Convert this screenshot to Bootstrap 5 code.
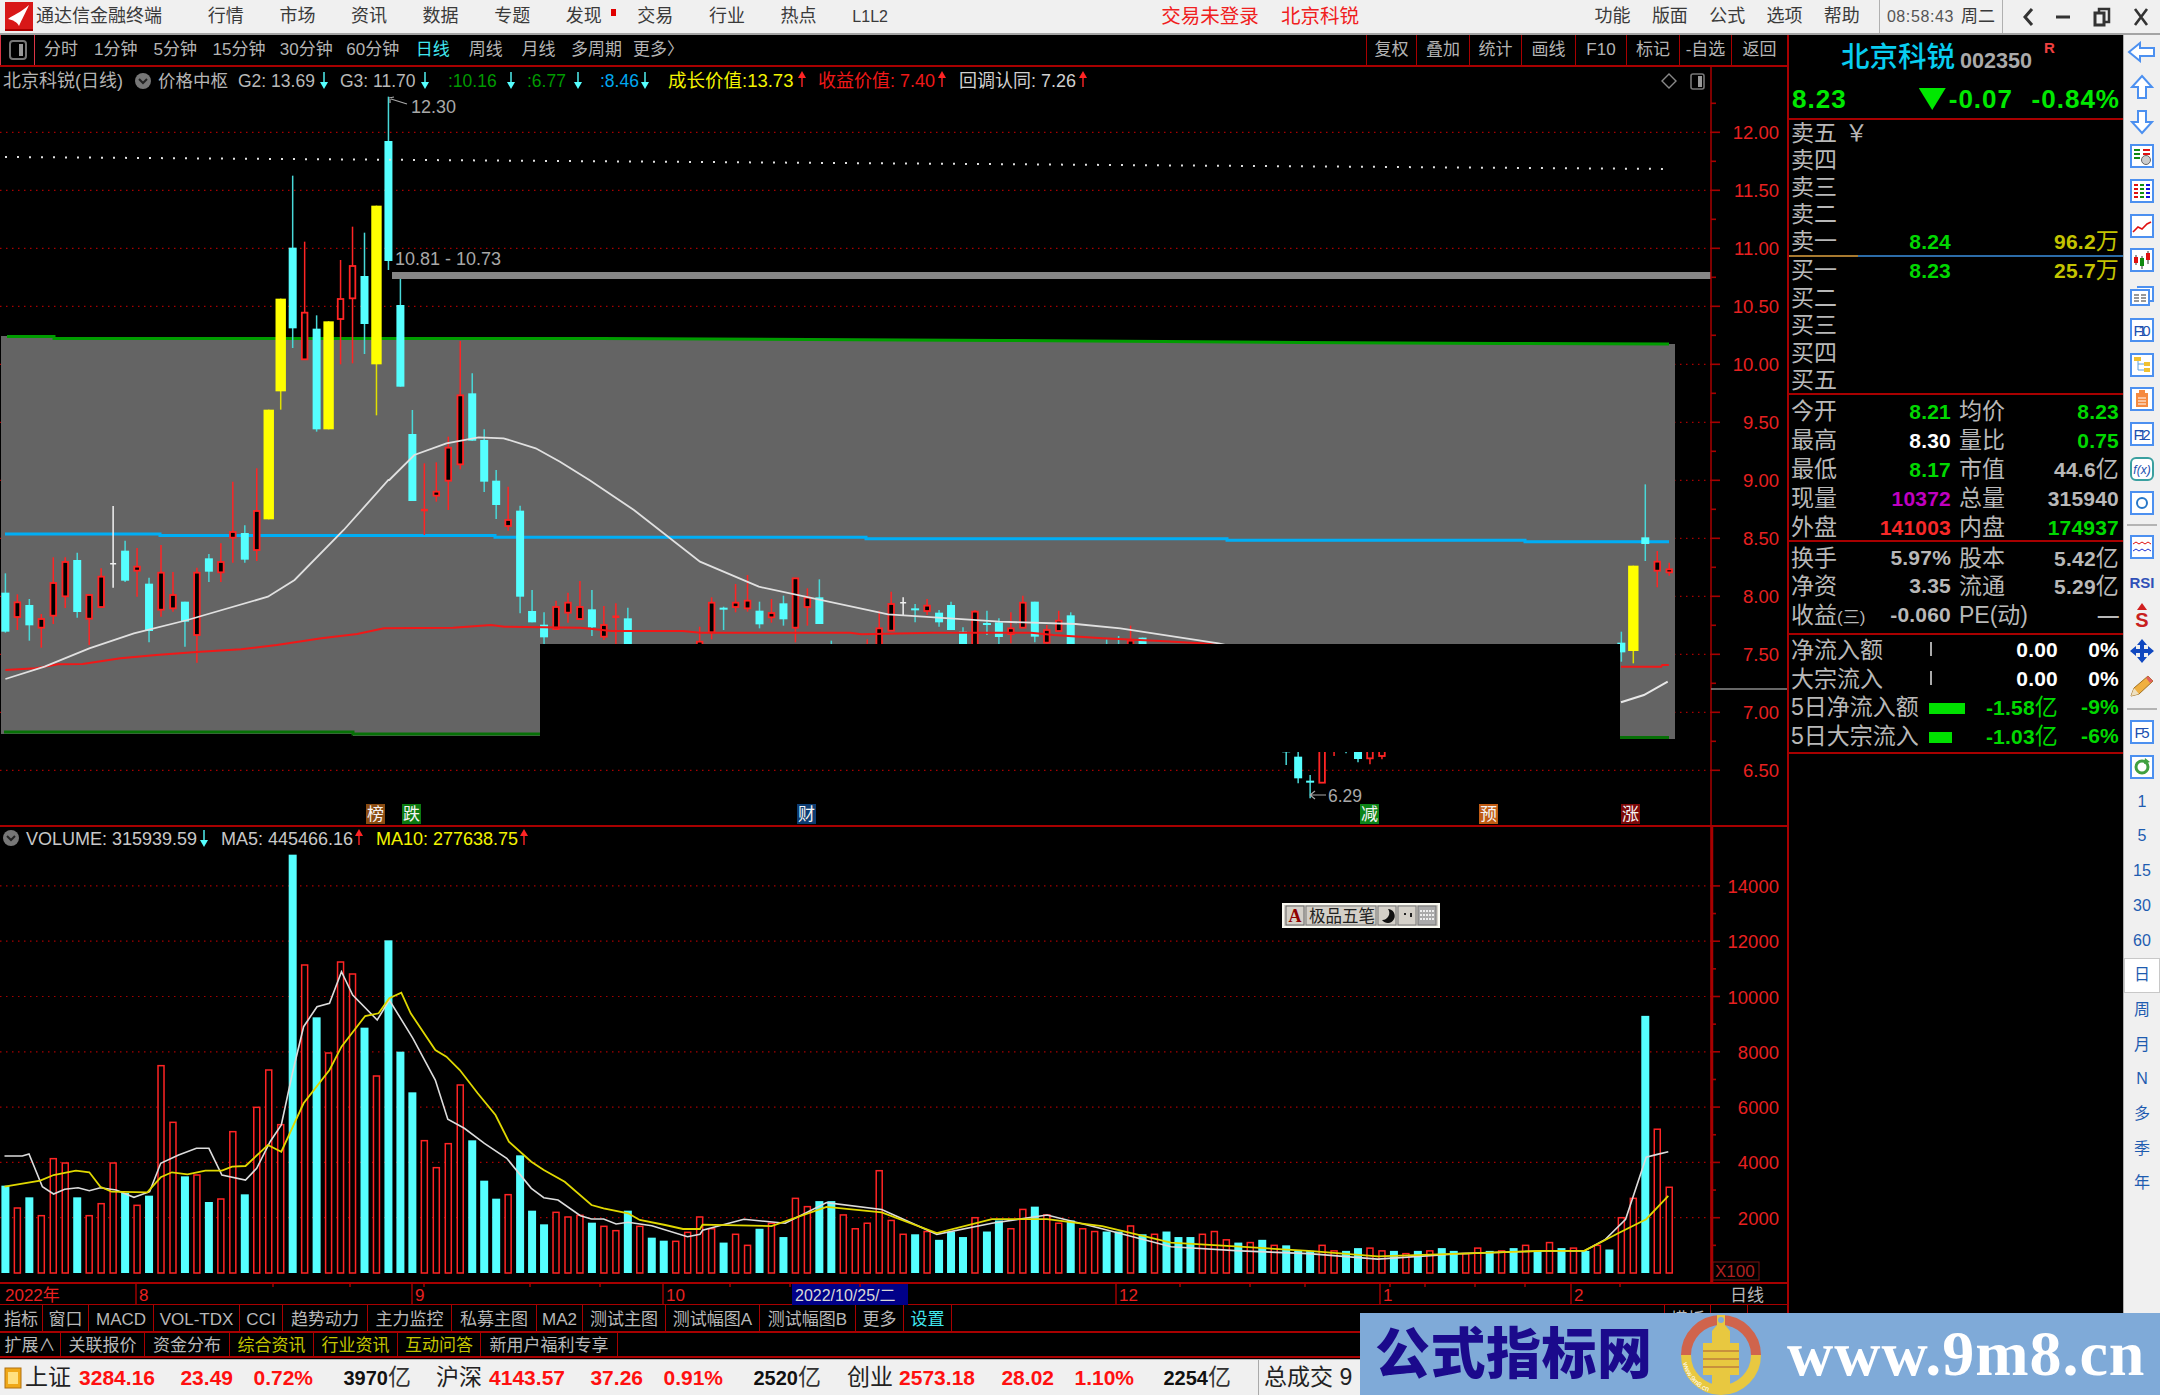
<!DOCTYPE html>
<html lang="zh-CN">
<head>
<meta charset="utf-8">
<title>通达信金融终端</title>
<link href="https://cdn.jsdelivr.net/npm/bootstrap@5.3.0/dist/css/bootstrap.min.css" rel="stylesheet">
<style>
html,body{margin:0;height:1395px;overflow:hidden;background:#000}
body,svg text{font-family:"Liberation Sans","Noto Sans CJK SC",sans-serif}
.tdx-app{width:2160px;height:1395px;position:relative;overflow:hidden;background:#000}
.tdx-title{height:35px;background:#f0f0f0;border-bottom:2px solid #a4a4a4;grid-template-columns:190px repeat(10,71.6px) 254px 100px 20px 80px 224px repeat(5,57.3px) 8.5px 124px 1fr;font-size:18px;color:#3a3a3a;line-height:33px;text-align:center}
.tdx-brand{display:flex;align-items:center;gap:3px;padding-left:5px;white-space:nowrap}
.tdx-red{color:#f02020;font-size:19.5px;white-space:nowrap}
.tdx-l12{font-size:16px}
.tdx-dot{position:relative}
.tdx-dot::after{content:"";position:absolute;width:5px;height:7px;background:#e00000;right:4px;top:9px}
.tdx-clock{border-left:1px solid #b0b0b0;border-right:1px solid #b0b0b0;height:33px;font-size:17px;display:flex;justify-content:center;gap:7px;white-space:nowrap}
.tdx-clock i{font-style:normal;color:#555;font-size:16px;letter-spacing:.6px}
.tdx-win{display:flex;justify-content:space-around;align-items:center;height:33px;padding:0 0 0 8px}
.tdx-body{height:1324px}
.tdx-left{width:1787px;flex:none}
.tdx-bar{height:32px;border-bottom:2px solid #a80000;color:#b4b4b4;font-size:17px;line-height:30px;text-align:center;grid-template-columns:35px 52px 57.5px 61.5px 66px 68.5px 64.5px 55.5px 50.5px 55px 61px 63px 1fr 50px 53px 52px 54px 51px 53px 52px 56px;white-space:nowrap}
.tdx-bar>.tdx-sep{border-left:1px solid #a80000}
.tdx-cyan{color:#40e8f0}
.tdx-chart{display:block;width:1787px;height:1238px}
.tdx-tabs{color:#b8b8b8;font-size:17px;text-align:center;white-space:nowrap;border-bottom:2px solid #a80000}
.tdx-tabs>span{border-right:1px solid #a80000;overflow:hidden}
.tdx-tabs-a{height:28px;line-height:29px;grid-template-columns:43px 46px 65px 86px 43px 85px 84px 85px 46px 83px 94px 96px 48px 48px 1fr 46px 37px 39px}
.tdx-tabs-b{height:25px;line-height:26px;grid-template-columns:61px 84px 85px 84px 84px 83px 137px 1fr}
.tdx-tabs>.tdx-none{border-right:0}
.tdx-olive{color:#c4c400}
.tdx-panel{width:336px;flex:none;background:#000;border-left:2px solid #a80000;color:#b8b8b8;font-size:23px;overflow:hidden}
.tdx-head{height:45px;padding-left:52px;gap:5px}
.tdx-head b{font-weight:500;font-size:28.5px;color:#08cdf0;line-height:45px}
.tdx-head span{font-size:21.6px;color:#aaa;padding-top:8px;font-weight:700}
.tdx-head sup{font-size:15px;color:#f04040;font-weight:700;top:-10px;position:relative;left:7px}
.tdx-price{height:40px;border-bottom:2px solid #a80000;color:#00e800;font-weight:700;font-size:26px;letter-spacing:1px;padding:0 3px 0 3px;line-height:38px;grid-template-columns:118px 103px 1fr}
.tdx-price>span:nth-child(n+2){text-align:right}
.tdx-tri{display:inline-block;width:27px;height:22px;background:#00e800;clip-path:polygon(0 0,100% 0,50% 100%);vertical-align:-2px;margin-right:3px}
.tdx-q{grid-template-columns:50px 110px 59px 109px;padding-left:2px;white-space:nowrap;font-size:23px}
.tdx-q b,.tdx-f b{text-align:right;font-size:21px;font-weight:700;letter-spacing:.2px}
.tdx-q em,.tdx-f em{font-style:normal;font-weight:400;font-size:23px}
.tdx-r27{height:27px;line-height:27px}
.tdx-r275{height:27.5px;line-height:27.5px}
.tdx-r29{height:29px;line-height:29px}
.tdx-r285{height:28.5px;line-height:28.5px}
.tdx-wide3{grid-template-columns:50px 110px 168px}
.tdx-mid{height:2px;background:linear-gradient(90deg,#a87a30 69px,#2c6ca8 69px)}
.tdx-sec{border-bottom:2px solid #a80000}
.tdx-pad6{padding-bottom:4px}
.tdx-pad3{padding-bottom:2px}
.tdx-top2{margin-top:2px}
.tdx-top1{margin-top:1px}
.tdx-paren{font-size:17px}
.tdx-f{grid-template-columns:138px 50px 79px 61px;padding-left:2px;white-space:nowrap;font-size:23px}
.tdx-g{color:#00d800}.tdx-w{color:#fff}.tdx-y{color:#c4c400}.tdx-m{color:#c000c0}.tdx-rr{color:#f82828}.tdx-s{color:#b8b8b8}
.tdx-meter{display:inline-block;height:11px;background:#00e000;vertical-align:1px}
.tdx-meter0{display:inline-block;width:2px;height:14px;background:#aaa;vertical-align:2px;margin-left:1px}
.tdx-side{flex:1;background:#f0f0f0;border-left:1px solid #b0b0b0;height:1360px;padding-top:0}
.tdx-it{height:34.7px;color:#1e5cb0;font-size:16px}
.tdx-gap9{height:9px}.tdx-gap12{height:12px}
.tdx-gap9 hr,.tdx-gap12 hr{margin:0 0;width:30px;border-top:2px solid #b4b4b4;opacity:1}
.tdx-sel{background:#fff;box-shadow:inset 0 0 0 1px #c8c8c8}
.tdx-foot{height:36px;background:#f0f0f0;border-top:1px solid #bbb;color:#222;font-size:23px;line-height:35px;white-space:nowrap;grid-template-columns:25px 54px 76px 78px 80px 98px 71px 83px 78px 80px 98px 72px 82px 79px 80px 97px 27px 1fr}
.tdx-foot b{font-size:21px;font-weight:700;color:#ff1010;text-align:right}
.tdx-foot u{text-decoration:none;font-size:20px;font-weight:700;color:#111;text-align:right}
.tdx-foot u em{font-style:normal;font-weight:400;font-size:23px;color:#333}
.tdx-foot .tdx-total{border-left:1px solid #aaa;padding-left:5px}
.tdx-mark{position:absolute;left:1360px;top:1313px;width:800px;height:82px;background:#7faad8;padding-left:15px}
.tdx-mark b{font-size:55px;color:#1b0a8c;font-weight:900;letter-spacing:.5px;line-height:82px;width:304px;flex:none}
.tdx-mark span{font-family:"Liberation Serif",serif;font-weight:700;font-size:64px;color:#fff;letter-spacing:1px;margin-left:24px;line-height:76px}
</style>
</head>
<body>
<div class="tdx-app d-flex flex-column">
  <div class="tdx-title d-grid">
    <div class="tdx-brand">
      <svg width="28" height="29" viewBox="0 0 28 29"><rect width="28" height="29" fill="#d81818"/><path d="M3 17C8 13 15 11 24 3C20 12 17 17 14 24C12 20 8 18 3 17Z" fill="#fff"/><path d="M0 27h28v2H0z" fill="#a00"/></svg>
      <span>通达信金融终端</span>
    </div>
    <span>行情</span><span>市场</span><span>资讯</span><span>数据</span><span>专题</span><span class="tdx-dot">发现</span><span>交易</span><span>行业</span><span>热点</span><span class="tdx-l12">L1L2</span>
    <span></span><span class="tdx-red">交易未登录</span><span></span><span class="tdx-red">北京科锐</span><span></span>
    <span>功能</span><span>版面</span><span>公式</span><span>选项</span><span>帮助</span><span></span>
    <div class="tdx-clock"><i>08:58:43</i><span>周二</span></div>
    <div class="tdx-win">
      <svg width="12" height="22" viewBox="0 0 12 22"><path d="M10 3L3 11L10 19" fill="none" stroke="#333" stroke-width="3"/></svg>
      <svg width="14" height="22" viewBox="0 0 14 22"><path d="M0 11h14" stroke="#333" stroke-width="3"/></svg>
      <svg width="18" height="22" viewBox="0 0 18 22"><path d="M6 6V3h10v13h-4" fill="none" stroke="#333" stroke-width="2.5"/><rect x="2" y="7" width="9" height="12" fill="none" stroke="#333" stroke-width="3"/></svg>
      <svg width="16" height="22" viewBox="0 0 16 22"><path d="M2 3L14 19M14 3L2 19" stroke="#333" stroke-width="2.6"/></svg>
    </div>
  </div>

  <div class="tdx-body d-flex">
    <div class="tdx-left d-flex flex-column">
      <div class="tdx-bar d-grid">
        <span class="d-flex align-items-center justify-content-center border-start border-end border-danger"><svg width="18" height="22" viewBox="0 0 18 22"><rect x="1" y="2" width="16" height="18" rx="3" fill="none" stroke="#777" stroke-width="2"/><rect x="10" y="5" width="4" height="12" fill="#999"/></svg></span>
        <span>分时</span><span>1分钟</span><span>5分钟</span><span>15分钟</span><span>30分钟</span><span>60分钟</span><span class="tdx-cyan">日线</span><span>周线</span><span>月线</span><span>多周期</span><span>更多〉</span><span></span>
        <span class="tdx-sep">复权</span><span class="tdx-sep">叠加</span><span class="tdx-sep">统计</span><span class="tdx-sep">画线</span><span class="tdx-sep">F10</span><span class="tdx-sep">标记</span><span class="tdx-sep">-自选</span><span class="tdx-sep">返回</span>
      </div>
      <svg id="tdxChart" class="tdx-chart" viewBox="0 67 1787 1238" xmlns="http://www.w3.org/2000/svg"></svg>
      <div class="tdx-tabs tdx-tabs-a d-grid">
        <span>指标</span><span>窗口</span><span>MACD</span><span>VOL-TDX</span><span>CCI</span><span>趋势动力</span><span>主力监控</span><span>私募主图</span><span>MA2</span><span>测试主图</span><span>测试幅图A</span><span>测试幅图B</span><span>更多</span><span class="tdx-cyan">设置</span><span></span><span>模板</span><span>+</span><span class="tdx-none"></span>
      </div>
      <div class="tdx-tabs tdx-tabs-b d-grid">
        <span>扩展∧</span><span>关联报价</span><span>资金分布</span><span class="tdx-olive">综合资讯</span><span class="tdx-olive">行业资讯</span><span class="tdx-olive">互动问答</span><span>新用户福利专享</span><span class="tdx-none"></span>
      </div>
    </div>

    <div class="tdx-panel">
      <div class="tdx-head d-flex align-items-center"><b>北京科锐</b><span>002350</span><sup>R</sup></div>
      <div class="tdx-price d-grid"><span>8.23</span><span><i class="tdx-tri"></i>-0.07</span><span>-0.84%</span></div>

      <div class="tdx-q tdx-wide3 tdx-r27 d-grid"><span>卖五</span><span class="tdx-s ps-1">￥</span><span></span></div>
      <div class="tdx-q tdx-wide3 tdx-r27 d-grid"><span>卖四</span><span></span><span></span></div>
      <div class="tdx-q tdx-wide3 tdx-r27 d-grid"><span>卖三</span><span></span><span></span></div>
      <div class="tdx-q tdx-wide3 tdx-r27 d-grid"><span>卖二</span><span></span><span></span></div>
      <div class="tdx-q tdx-wide3 tdx-r27 d-grid"><span>卖一</span><b class="tdx-g">8.24</b><b class="tdx-y">96.2<em>万</em></b></div>
      <div class="tdx-mid"></div>
      <div class="tdx-q tdx-wide3 tdx-r275 d-grid"><span>买一</span><b class="tdx-g">8.23</b><b class="tdx-y">25.7<em>万</em></b></div>
      <div class="tdx-q tdx-wide3 tdx-r275 d-grid"><span>买二</span><span></span><span></span></div>
      <div class="tdx-q tdx-wide3 tdx-r275 d-grid"><span>买三</span><span></span><span></span></div>
      <div class="tdx-q tdx-wide3 tdx-r275 d-grid"><span>买四</span><span></span><span></span></div>
      <div class="tdx-q tdx-wide3 tdx-r275 d-grid tdx-sec"><span>买五</span><span></span><span></span></div>

      <div class="tdx-q tdx-r29 tdx-top2 d-grid"><span>今开</span><b class="tdx-g">8.21</b><span class="ps-2">均价</span><b class="tdx-g">8.23</b></div>
      <div class="tdx-q tdx-r29 d-grid"><span>最高</span><b class="tdx-w">8.30</b><span class="ps-2">量比</span><b class="tdx-g">0.75</b></div>
      <div class="tdx-q tdx-r29 d-grid"><span>最低</span><b class="tdx-g">8.17</b><span class="ps-2">市值</span><b class="tdx-s">44.6<em>亿</em></b></div>
      <div class="tdx-q tdx-r29 d-grid"><span>现量</span><b class="tdx-m">10372</b><span class="ps-2">总量</span><b class="tdx-s">315940</b></div>
      <div class="tdx-q tdx-r29 d-grid tdx-sec"><span>外盘</span><b class="tdx-rr">141003</b><span class="ps-2">内盘</span><b class="tdx-g">174937</b></div>

      <div class="tdx-q tdx-r285 tdx-top2 d-grid"><span>换手</span><b class="tdx-s">5.97%</b><span class="ps-2">股本</span><b class="tdx-s">5.42<em>亿</em></b></div>
      <div class="tdx-q tdx-r285 d-grid"><span>净资</span><b class="tdx-s">3.35</b><span class="ps-2">流通</span><b class="tdx-s">5.29<em>亿</em></b></div>
      <div class="tdx-sec tdx-pad6"><div class="tdx-q tdx-r285 d-grid"><span>收益<span class="tdx-paren">(三)</span></span><b class="tdx-s">-0.060</b><span class="ps-2">PE(动)</span><b class="tdx-s">—</b></div></div>

      <div class="tdx-sec tdx-pad3 tdx-top1">
        <div class="tdx-f tdx-r285 d-grid"><span>净流入额</span><span><i class="tdx-meter0"></i></span><b class="tdx-w">0.00</b><b class="tdx-w">0%</b></div>
        <div class="tdx-f tdx-r285 d-grid"><span>大宗流入</span><span><i class="tdx-meter0"></i></span><b class="tdx-w">0.00</b><b class="tdx-w">0%</b></div>
        <div class="tdx-f tdx-r285 d-grid"><span>5日净流入额</span><span><i class="tdx-meter" style="width:36px"></i></span><b class="tdx-g">-1.58<em>亿</em></b><b class="tdx-g">-9%</b></div>
        <div class="tdx-f tdx-r285 d-grid"><span>5日大宗流入</span><span><i class="tdx-meter" style="width:23px"></i></span><b class="tdx-g">-1.03<em>亿</em></b><b class="tdx-g">-6%</b></div>
      </div>
    </div>

    <div class="tdx-side d-flex flex-column align-items-center">
      <div class="tdx-it d-flex align-items-center"><svg width="30" height="22" viewBox="0 0 30 22"><path d="M2 11L13 2V7H27V15H13V20Z" fill="#fff" stroke="#4c90f0" stroke-width="2"/></svg></div>
      <div class="tdx-it d-flex align-items-center"><svg width="24" height="26" viewBox="0 0 24 26"><path d="M12 2L22 13H16V24H8V13H2Z" fill="#fff" stroke="#4c90f0" stroke-width="2"/></svg></div>
      <div class="tdx-it d-flex align-items-center"><svg width="24" height="26" viewBox="0 0 24 26"><path d="M12 24L22 13H16V2H8V13H2Z" fill="#fff" stroke="#4c90f0" stroke-width="2"/></svg></div>
      <div class="tdx-it d-flex align-items-center"><svg width="24" height="24" viewBox="0 0 24 24"><rect x="1" y="1" width="22" height="22" fill="#fff" stroke="#4c90f0" stroke-width="2"/><path d="M4 6h6M4 10h6M4 14h6" stroke="#108a10" stroke-width="2"/><path d="M13 6h7M13 10h7" stroke="#e01010" stroke-width="2"/><circle cx="16" cy="16" r="4.5" fill="#ccc" stroke="#666"/></svg></div>
      <div class="tdx-it d-flex align-items-center"><svg width="24" height="24" viewBox="0 0 24 24"><rect x="1" y="1" width="22" height="22" fill="#fff" stroke="#4c90f0" stroke-width="2"/><path d="M4 6h4M4 10h4M4 14h4M4 18h4" stroke="#e01010" stroke-width="2"/><path d="M10 6h4M10 10h4M10 14h4M10 18h4" stroke="#109010" stroke-width="2"/><path d="M16 6h4M16 10h4M16 14h4M16 18h4" stroke="#1010e0" stroke-width="2"/></svg></div>
      <div class="tdx-it d-flex align-items-center"><svg width="24" height="24" viewBox="0 0 24 24"><rect x="1" y="1" width="22" height="22" fill="#fff" stroke="#4c90f0" stroke-width="2"/><path d="M3 18L8 13L12 15L17 10L21 8" fill="none" stroke="#e01010" stroke-width="1.6"/></svg></div>
      <div class="tdx-it d-flex align-items-center"><svg width="24" height="24" viewBox="0 0 24 24"><rect x="1" y="1" width="22" height="22" fill="#fff" stroke="#4c90f0" stroke-width="2"/><path d="M6 7V17M12 8V21M18 3V16" stroke="#333"/><rect x="4" y="9" width="4" height="6" fill="#e01010"/><rect x="10" y="10" width="4" height="8" fill="#108a10"/><rect x="16" y="5" width="4" height="7" fill="#e01010"/></svg></div>
      <div class="tdx-it d-flex align-items-center"><svg width="26" height="24" viewBox="0 0 26 24"><path d="M8 4H24V18H19" fill="#fff" stroke="#4c90f0" stroke-width="2"/><rect x="2" y="7" width="18" height="15" fill="#fff" stroke="#4c90f0" stroke-width="2"/><path d="M5 12h5M12 12h5M5 15h5M12 15h5M5 18h5M12 18h5" stroke="#777" stroke-width="1.5"/></svg></div>
      <div class="tdx-it d-flex align-items-center"><svg width="24" height="24" viewBox="0 0 24 24"><rect x="1" y="1" width="22" height="22" fill="#fff" stroke="#4c90f0" stroke-width="2"/><text x="12" y="18" text-anchor="middle" font-size="15" fill="#2050b0" textLength="17">F10</text></svg></div>
      <div class="tdx-it d-flex align-items-center"><svg width="24" height="24" viewBox="0 0 24 24"><rect x="1" y="1" width="22" height="22" fill="#fff" stroke="#4c90f0" stroke-width="2"/><path d="M8 7V17H14M8 11H14" fill="none" stroke="#5aa0e0"/><rect x="4" y="4" width="7" height="4" fill="#f0c030"/><rect x="14" y="9" width="6" height="4" fill="#f0c030"/><rect x="14" y="15" width="6" height="4" fill="#f0c030"/></svg></div>
      <div class="tdx-it d-flex align-items-center"><svg width="24" height="24" viewBox="0 0 24 24"><rect x="1" y="1" width="22" height="22" fill="#fff" stroke="#4c90f0" stroke-width="2"/><rect x="6" y="6" width="12" height="14" fill="#f58a40"/><rect x="9" y="3" width="6" height="4" fill="#f58a40"/><path d="M8 11h8M8 14h8M8 17h8" stroke="#fff"/></svg></div>
      <div class="tdx-it d-flex align-items-center"><svg width="24" height="24" viewBox="0 0 24 24"><rect x="1" y="1" width="22" height="22" fill="#fff" stroke="#4c90f0" stroke-width="2"/><text x="12" y="18" text-anchor="middle" font-size="15" fill="#2050b0" textLength="17">F12</text></svg></div>
      <div class="tdx-it d-flex align-items-center"><svg width="24" height="24" viewBox="0 0 24 24"><rect x="1" y="1" width="22" height="22" rx="5" fill="#fff" stroke="#3aa0a0" stroke-width="2"/><text x="12" y="17" text-anchor="middle" font-size="12" font-style="italic" fill="#2050b0">f(x)</text></svg></div>
      <div class="tdx-it d-flex align-items-center"><svg width="24" height="24" viewBox="0 0 24 24"><rect x="1" y="1" width="22" height="22" fill="#fff" stroke="#4c90f0" stroke-width="2"/><circle cx="12" cy="12" r="5" fill="none" stroke="#2878c8" stroke-width="2"/></svg></div>
      <div class="tdx-gap9 d-flex align-items-center"><hr></div>
      <div class="tdx-it d-flex align-items-center"><svg width="24" height="24" viewBox="0 0 24 24"><rect x="1" y="1" width="22" height="22" fill="#fff" stroke="#4c90f0" stroke-width="2"/><path d="M3 9l3-2 3 2 3-2 3 2 3-2 3 2" fill="none" stroke="#e01010"/><path d="M3 16l3-2 3 2 3-2 3 2 3-2 3 2" fill="none" stroke="#2030d0"/></svg></div>
      <div class="tdx-it d-flex align-items-center"><svg width="28" height="22" viewBox="0 0 28 22"><text x="14" y="17" text-anchor="middle" font-size="15" font-weight="700" fill="#3050b8">RSI</text></svg></div>
      <div class="tdx-it d-flex align-items-center"><svg width="24" height="28" viewBox="0 0 24 28"><path d="M12 1L17 8H7Z" fill="#d02020"/><text x="12" y="25" text-anchor="middle" font-size="20" font-weight="700" fill="#c82020">S</text></svg></div>
      <div class="tdx-it d-flex align-items-center"><svg width="26" height="26" viewBox="0 0 26 26"><path d="M13 1L18 7H15V11H19V8L25 13L19 18V15H15V19H18L13 25L8 19H11V15H7V18L1 13L7 8V11H11V7H8Z" fill="#1048c0"/></svg></div>
      <div class="tdx-it d-flex align-items-center"><svg width="26" height="24" viewBox="0 0 26 24"><path d="M2 22L5 14L19 2L24 7L10 20Z" fill="#f0b040" stroke="#a07020"/><path d="M2 22L5 14L10 20Z" fill="#eee0c0"/><path d="M19 2L24 7L21 9L17 4Z" fill="#e06060"/></svg></div>
      <div class="tdx-gap12 d-flex align-items-center"><hr></div>
      <div class="tdx-it d-flex align-items-center"><svg width="24" height="24" viewBox="0 0 24 24"><rect x="1" y="1" width="22" height="22" fill="#fff" stroke="#4c90f0" stroke-width="2"/><text x="12" y="18" text-anchor="middle" font-size="15" fill="#2050b0" textLength="15">F5</text></svg></div>
      <div class="tdx-it d-flex align-items-center"><svg width="24" height="24" viewBox="0 0 24 24"><rect x="1" y="1" width="22" height="22" fill="#fff" stroke="#4c90f0" stroke-width="2"/><circle cx="12" cy="12" r="6" fill="none" stroke="#40a040" stroke-width="3"/><path d="M15 3l5 4-6 2Z" fill="#40a040"/></svg></div>
      <div class="tdx-it d-flex align-items-center">1</div>
      <div class="tdx-it d-flex align-items-center">5</div>
      <div class="tdx-it d-flex align-items-center">15</div>
      <div class="tdx-it d-flex align-items-center">30</div>
      <div class="tdx-it d-flex align-items-center">60</div>
      <div class="tdx-it tdx-sel d-flex align-items-center justify-content-center w-100">日</div>
      <div class="tdx-it d-flex align-items-center">周</div>
      <div class="tdx-it d-flex align-items-center">月</div>
      <div class="tdx-it d-flex align-items-center">N</div>
      <div class="tdx-it d-flex align-items-center">多</div>
      <div class="tdx-it d-flex align-items-center">季</div>
      <div class="tdx-it d-flex align-items-center">年</div>
    </div>
  </div>

  <div class="tdx-foot d-grid">
    <span class="d-flex align-items-center ps-1"><svg width="18" height="24" viewBox="0 0 18 24"><rect x="1" y="2" width="16" height="20" fill="#f0a818" stroke="#b07010"/><rect x="4" y="6" width="10" height="12" fill="#ffe080"/></svg></span>
    <span>上证</span><b>3284.16</b><b>23.49</b><b>0.72%</b><u>3970<em>亿</em></u><span class="text-end">沪深</span><b>4143.57</b><b>37.26</b><b>0.91%</b><u>2520<em>亿</em></u><span class="text-end">创业</span><b>2573.18</b><b>28.02</b><b>1.10%</b><u>2254<em>亿</em></u><span></span><span class="tdx-total">总成交 9</span>
  </div>

  <div class="tdx-mark d-flex align-items-center">
    <b>公式指标网</b>
    <svg width="84" height="82" viewBox="0 0 84 82" class="flex-none">
      <path d="M7 42A35 35 0 0 1 77 42" fill="none" stroke="#d0644c" stroke-width="10"/>
      <path d="M7 42A35 35 0 0 0 77 42" fill="none" stroke="#e8c840" stroke-width="10"/>
      <path d="M38 2h8v10l5 6v12h9v32h-9v14H33V62h-9V30h9V18l5-6Z" fill="#e8c840"/>
      <circle cx="42" cy="7" r="3" fill="#7faad8"/>
      <path d="M24 38h36M24 46h36M24 54h36" stroke="#c8903c" stroke-width="2"/>
      <path id="tdxArc" d="M4 50A38 38 0 0 0 34 80" fill="none"/>
      <text font-size="7" fill="#fff"><textPath href="#tdxArc">www.9m8.cn</textPath></text>
    </svg>
    <span>www.9m8.cn</span>
  </div>
</div>

<script src="https://cdn.jsdelivr.net/npm/bootstrap@5.3.0/dist/js/bootstrap.bundle.min.js"></script>
<script>
(function(){
var S=[];var RED='#a80000',TXT='#e82020',CY='#55ffff',RD='#ff2424',YL='#ffff00';
function bx(i){return 5.4+11.97*i}
function Y(z){return 480+z/3}
function line(x1,y1,x2,y2,c,w,extra){S.push('<line x1="'+x1+'" y1="'+y1+'" x2="'+x2+'" y2="'+y2+'" stroke="'+c+'" stroke-width="'+(w||1)+'" '+(extra||'')+'/>')}
function rect(x,y,w,h,f,extra){S.push('<rect x="'+x+'" y="'+y+'" width="'+w+'" height="'+h+'" fill="'+f+'" '+(extra||'')+'/>')}
function poly(p,c,w,extra){S.push('<polyline fill="none" points="'+p.map(function(a){return a[0].toFixed(1)+','+a[1].toFixed(1)}).join(' ')+'" stroke="'+c+'" stroke-width="'+w+'" '+(extra||'')+'/>')}
function txt(x,y,s,c,fs,extra){S.push('<text x="'+x+'" y="'+y+'" fill="'+c+'" font-size="'+fs+'" '+(extra||'')+'>'+s+'</text>')}
function arrow(x,y,c,up){
  if(up){line(x,y-7,x,y+7,c,1.4);S.push('<path d="M'+(x-4)+' '+(y-2)+'L'+x+' '+(y-9)+'L'+(x+4)+' '+(y-2)+'Z" fill="'+c+'"/>')}
  else{line(x,y-8,x,y+6,c,1.4);S.push('<path d="M'+(x-4)+' '+(y+2)+'L'+x+' '+(y+9)+'L'+(x+4)+' '+(y+2)+'Z" fill="'+c+'"/>')}
}
var z6=function(a){return a.map(function(p){return [p[0]/2.24,480+p[1]/3]})};
var z12=function(a){return a.map(function(p){return [540+p[0]/2.24,480+p[1]/3]})};
var z5=function(a){return a.map(function(p){return [p[0]/2.8,80+p[1]/3]})};
var z10=function(a){return a.map(function(p){return [1200+p[0]/2.613,480+p[1]/3]})};
var z9=function(a){return a.map(function(p){return [p[0]/2.24,840+p[1]/3]})};
var sh=function(a){return a.map(function(p){return [p[0]*1.3776,p[1]*1.3776]})};

/* price grid */
function py(p){return 132.3+(12-p)*116}
for(var p=12;p>=6.5;p-=.5){line(0,py(p),1711,py(p),RED,1.2,'stroke-dasharray="1.5 4.5"')}
function vy(v){return 1273-v*0.02765}
for(var v=2000;v<=14000;v+=2000){line(0,vy(v),1711,vy(v),RED,1.2,'stroke-dasharray="1.5 4.5"')}

/* band */
S.push('<polygon fill="#646464" points="1,336 54,336 54,338 600,338 1000,340 1300,342 1675,344 1675,739 1620,739 540,736 353,736 353,734 1,734"/>');
poly([[7,336.5],[54,336.5],[54,338.5],[600,338.5],[1000,340.5],[1300,342.5],[1500,343.5],[1669,344]],'#009c00',3);
poly([[4,732],[353,732],[353,734],[540,734]],'#067006',3);
poly([[1620,737.5],[1669,737.5]],'#067006',3);
poly([[5,534],[160,534],[160,535.5],[495,535.5],[495,537.3],[866,537.3],[866,538.7],[1227,538.7],[1227,540.3],[1525,540.3],[1525,541.7],[1669,541.7]],'#00aef5',3);

/* candles: [index,type,high,bodyTop,bodyBottom,low] */
var C=[[0,'c',280,338,455,458],[1,'r',343,367,411,450],[2,'c',357,375,436,482],[3,'r',402,417,443,503],[4,'r',232,309,407,432],[5,'r',232,246,349,384],[6,'c',218,240,396,413],[7,'r',345,345,416,495],[8,'r',265,290,381,381],[9,'w',78,249,251,323],[10,'c',182,212,302,306],[11,'r',204,260,272,350],[12,'c',293,311,453,487],[13,'r',195,278,389,410],[14,'r',276,345,385,395],[15,'c',365,365,425,500],[16,'r',263,278,465,548],[17,'c',222,235,275,306],[18,'r',190,246,277,306],[19,'r',5,156,173,248],[20,'c',136,159,239,248],[21,'r',-35,93,210,243],
[22,'y',-211,-211,118,118],[23,'y',-544,-544,-266,-211],[24,'c',-913,-697,-455,-396],[25,'r',-715,-502,-362,-362],[26,'c',-494,-454,-152,-145],[27,'y',-476,-476,-152,-152],[28,'r',-660,-543,-483,-347],[29,'r',-760,-642,-545,-350],[30,'c',-742,-612,-468,-378],[31,'y',-823,-823,-347,-194],[32,'c',-1150,-1017,-657,-630],[33,'c',-603,-525,-280,-280],[34,'c',-210,-138,63,63],[35,'r',-50,88,93,165],[36,'r',-53,35,47,65],[37,'r',-130,-97,2,90],[38,'r',-417,-254,-47,-32],[39,'c',-320,-260,-118,-118],[40,'c',-152,-120,5,36],[41,'c',-30,2,75,117],[42,'r',20,120,138,152],[43,'c',77,92,350,400],[44,'c',330,393,427,427],[45,'c',397,434,472,520],[46,'r',362,381,447,447],[47,'r',338,368,398,428],[48,'r',303,381,417,420],[49,'c',330,388,442,468],[50,'r',378,435,470,480],[51,'r',370,408,412,495],[52,'c',383,415,560,600],
[58,'r',440,485,560,600],[59,'r',352,368,457,478],[60,'c',380,383,386,450],[61,'r',312,368,381,397],[62,'r',285,362,385,395],[63,'c',365,392,433,445],[64,'r',357,399,412,428],[65,'c',347,370,418,437],[66,'r',295,295,443,487],[67,'r',325,353,381,437],[68,'c',298,352,432,432],[69,'c',482,500,560,600],[72,'r',478,500,560,600],[73,'r',392,445,560,600],[74,'r',335,372,452,452],[75,'w',352,366,368,405],[76,'c',372,385,390,427],[77,'r',357,377,393,405],[78,'c',390,398,427,440],[79,'c',365,375,450,450],[80,'c',442,455,560,600],[81,'r',390,395,560,600],[82,'c',392,429,431,465],[83,'c',415,427,471,560],[84,'r',397,445,462,490],[85,'r',347,368,443,443],[86,'c',365,365,470,487],[87,'r',435,450,488,560],[88,'r',392,422,453,453],[89,'c',397,406,560,600],[92,'c',478,500,560,600],[93,'c',468,500,560,600],[94,'r',437,482,560,600],[95,'c',473,473,560,600],
[107,'c',700,700,817,855],[108,'c',700,830,895,910],[109,'c',885,902,904,955],[110,'r',700,700,908,908],[111,'r',700,700,720,828],[112,'c',700,700,720,820],[113,'c',700,700,837,847],[114,'r',700,700,835,853],[115,'r',700,700,828,838],
[135,'c',455,488,517,545],[136,'y',257,257,513,550],[137,'c',13,172,192,243],[138,'r',213,245,272,322],[139,'r',248,268,277,287]];
C.forEach(function(d){
  var x=bx(d[0]),t=d[1],col=t=='c'?CY:t=='r'?RD:t=='y'?YL:'#f0f0f0';
  line(x,Y(d[2]),x,Y(d[5]),t=='c'?'#48d8d8':t=='y'?'#e0e000':col,1.5);
  var tp=Y(d[3]),bt=Y(d[4]);
  if(t=='c')rect(x-4,tp,8,Math.max(bt-tp,2),CY);
  if(t=='y')rect(x-5.2,tp,10.4,bt-tp,YL);
  if(t=='w')rect(x-3,tp,6,Math.max(bt-tp,1.5),col);
  if(t=='r'){ if(bt-tp<3) rect(x-3.5,tp-.5,7,2.5,RD); else rect(x-2.8,tp,5.6,bt-tp,'#000','stroke="'+RD+'" stroke-width="1.8"');}
});

/* averages */
poly(z6([[12,570],[80,565],[130,553],[185,552],[270,535],[350,525],[440,516],[540,508],[620,495],[720,475],[800,462],[860,445],[1015,443],[1100,435],[1130,440],[1300,443],[1370,453],[1530,453],[1568,458]]).concat(z12([[695,458],[720,463],[880,458],[1100,458],[1150,465],[1260,475],[1390,483],[1480,490],[1568,500]])),'#f01818',2);
poly(z10([[1100,560],[1205,560],[1208,555],[1225,555]]),'#f01818',2);
poly(z6([[12,597],[100,560],[200,505],[300,460],[420,420],[600,350],[660,300],[770,150],[870,0]]).concat(z5([[1090,1200],[1160,1125],[1250,1090],[1340,1072],[1410,1075],[1500,1105],[1568,1145]])).concat(z6([[1320,0],[1420,90],[1568,245]])).concat(z12([[490,320],[780,403],[1030,425],[1200,432],[1300,445],[1520,490],[1568,505]])),'#e0e0e0',1.8);
poly(z10([[1100,667],[1160,645],[1222,605]]),'#e8e8e8',2);

/* covered area of the chart */
rect(540,644,1080,108,'#000');

/* overlays */
line(5,157,1670,169,'#e0e0e0',2,'stroke-dasharray="2 10"');
rect(392,272,1319,7,'#868686');
txt(395,265,'10.81 - 10.73','#a8a8a8',18);
txt(411,113,'12.30','#a8a8a8',18);
S.push('<path d="M389 98L394 97M391 99L407 104M390 99V103" stroke="#aaa" stroke-width="1.2" fill="none"/>');
txt(1328,802,'6.29','#a8a8a8',17.5);
S.push('<path d="M1310 795H1326M1310 795L1315 791M1310 795L1315 799" stroke="#aaa" stroke-width="1.2" fill="none"/>');

/* signal badges */
[[366,'榜','#8a4c12'],[402,'跌','#0c7a10'],[797,'财','#0c3c72'],[1360,'减','#0c8418'],[1479,'预','#c05c14'],[1621,'涨','#7c0808']].forEach(function(b){
  rect(b[0],804,19,20,b[2]);
  txt(b[0]+9.5,820,b[1],'#f4f4f4',17,'text-anchor="middle"');
});

/* axis */
line(1711,67,1711,1283,RED,1.5);
line(0,826,1787,826,RED,2);
line(1712,826,1712,1283,RED,2.5);
for(var q=12.25;q>=6.5;q-=.25){var yy=py(q),maj=Math.abs(q*2-Math.round(q*2))<.01;line(1711,yy,maj?1720:1716,yy,RED,1.6);if(maj&&q<=12)txt(1779,yy+7,q.toFixed(2),TXT,18.5,'text-anchor="end"');}
for(var w=1000;w<=14000;w+=1000){var vv=vy(w),mj=w%2000==0;line(1711,vv,mj?1720:1716,vv,RED,1.6);if(mj)txt(1779,vv+7,w,TXT,18.5,'text-anchor="end"');}
line(1711,689,1787,689,'#8a8a8a',1.6);

/* volumes */
var V=[['c',1038],['r',1105],['c',1073],['r',1128],['r',957],['r',970],['c',1073],['r',1128],['r',1092],['r',970],['c',1060],['r',1097],['c',1068],['r',678],['r',848],['c',1010],['r',1006],['c',1087],['r',1078],['r',876],['c',1064],['r',803],['r',691],['r',855],['c',45],['r',376],['c',533],['r',640],['r',367],['r',403],['c',564],['r',709],['c',302],['c',636],['c',758],['r',903],['r',984],['r',912],['r',736],['c',902],['c',1023],['c',1077],['r',1065],['c',947],['c',1113],['c',1154],['r',1118],['r',1132],['r',1127],['c',1149],['r',1160],['r',1173],['c',1113],['r',1160],['c',1194],['c',1203],['r',1205],['r',1178],['r',1132]];
V.forEach(function(d,i){
  var h=(1300-d[1])/3,x=bx(i);
  if(d[0]=='c')rect(x-4,1273-h,8,h,CY);else rect(x-3,1273-h,6,h,'#000','stroke="'+RD+'" stroke-width="1.5"');
});
var M=[[59,'r',1600],[60,'c',1100],[61,'r',1400],[62,'r',1000],[63,'c',1600],[64,'r',1800],[65,'c',1300],[66,'r',2700],[67,'r',2400],[68,'c',2600],[69,'c',2600],[70,'r',2100],[71,'r',1600],[72,'r',1800],[73,'r',3700],[74,'r',1900],[75,'r',1400],[76,'c',1400],[77,'r',1500],[78,'c',1200],[79,'c',1500],[80,'c',1300],[81,'r',2000],[82,'c',1500],[83,'c',1900],[84,'r',1600],[85,'r',2300],[86,'c',2400],[87,'r',2100],[88,'r',1800],[89,'c',1900],[90,'r',1600],[91,'r',1500],[92,'c',1500],[93,'c',1500],[94,'r',1700],[95,'c',1400],[96,'r',1400],[97,'c',1500],[98,'c',1300],[99,'c',1300],[100,'r',1400],[101,'r',1500],[102,'r',1200],[103,'c',1100],[104,'r',1100],[105,'c',1200],[106,'r',1000],[107,'c',1000],[108,'c',800],[109,'c',800],[110,'r',1000],[111,'r',800],[112,'c',800],[113,'c',900],[114,'r',900],[115,'r',800],[116,'c',800],[117,'r',700],[118,'c',800],[119,'r',800],[120,'c',900],[121,'c',800],[122,'r',700],[123,'r',900],[124,'c',800],[125,'r',800],[126,'c',900],[127,'r',1000],[128,'c',800],[129,'r',1100],[130,'c',900],[131,'r',900],[132,'c',800],[133,'r',1000],[134,'c',850],[135,'r',2000],[136,'r',2700],[137,'c',9300],[138,'r',5200],[139,'r',3100]];
M.forEach(function(d){
  var h=d[2]*0.02765,x=bx(d[0]);
  if(d[1]=='c')rect(x-4,1273-h,8,h,CY);else rect(x-3,1273-h,6,h,'#000','stroke="'+RD+'" stroke-width="1.5"');
});
poly(z9([[10,948],[50,948],[65,942],[95,1040],[120,1062],[145,1048],[175,1043],[200,1052],[225,1043],[260,1050],[300,1072],[335,1055],[360,970],[400,945],[440,925],[468,925],[497,1005],[550,1020],[575,985],[605,905],[630,855],[655,700],[680,560],[710,500],[738,490],[765,395],[790,465],[845,540],[872,480],[925,595],[975,720],[1003,838],[1040,865],[1085,910],[1135,955],[1190,1045],[1218,1073],[1250,1080],[1300,1127],[1325,1137],[1352,1137],[1380,1152],[1407,1147],[1460,1157],[1540,1190],[1568,1183]]).concat(sh([[510,893],[540,885],[570,888],[600,873],[640,878],[680,896],[720,888],[760,882],[800,892],[850,905],[900,908],[950,910],[1000,914],[1060,910],[1120,908],[1150,908],[1165,900],[1180,885],[1195,840],[1203,838],[1211,836]])),'#dcdcdc',1.6);
poly(z9([[10,1040],[90,1022],[120,1005],[170,992],[200,997],[225,1040],[250,1055],[330,1057],[360,1012],[385,997],[420,1003],[460,992],[497,992],[520,980],[550,978],[600,915],[630,935],[680,790],[738,690],[765,620],[818,528],[848,520],[872,475],[899,458],[920,520],[975,630],[1000,650],[1030,690],[1070,760],[1110,825],[1140,905],[1190,965],[1218,990],[1265,1025],[1325,1095],[1352,1105],[1407,1120],[1433,1140],[1490,1155],[1530,1167],[1568,1167]]).concat(sh([[510,889],[560,890],[600,876],[640,880],[680,895],[720,885],[760,885],[800,890],[850,902],[900,905],[950,908],[1000,912],[1060,910],[1120,908],[1150,908],[1175,895],[1195,885],[1211,868]])),'#e0d800',1.8);

rect(1713,1262,46,18,'#000','stroke="#7a1010" stroke-width="1"');
txt(1715,1277,'X100','#b02020',17);

/* time axis */
line(0,1283,1787,1283,RED,2);
line(0,1305,1787,1305,RED,2);
rect(792,1284,116,21,'#000088');
txt(795,1301,'2022/10/25/二','#d8d8d8',16);
txt(5,1301,'2022年',TXT,17);
[[136,'8'],[412,'9'],[663,'10'],[1116,'12'],[1380,'1'],[1571,'2']].forEach(function(t){line(t[0],1283,t[0],1305,RED,1.4);txt(t[0]+3,1301,t[1],TXT,17)});
[273,350,424,530,600,730,790,860,1180,1250,1305,1390,1425,1475,1525,1620].forEach(function(x){line(x,1283,x,1287,RED,1.4)});
txt(1730,1301,'日线','#b8b8b8',17);

/* legends */
S.push('<circle cx="143" cy="81" r="8" fill="#777"/><path d="M139 79l4 4 4-4" stroke="#222" stroke-width="2" fill="none"/>');
txt(3,87,'北京科锐(日线)','#b4b4b4',18);
txt(158,87,'价格中枢','#b4b4b4',17.5);
txt(238,87,'G2: 13.69','#b8b8b8',17.5);arrow(324,80,CY);
txt(340,87,'G3: 11.70','#b8b8b8',17.5);arrow(425,80,CY);
txt(448,87,':10.16','#009a00',17.5);arrow(511,80,CY);
txt(527,87,':6.77','#009a00',17.5);arrow(578,80,CY);
txt(600,87,':8.46','#00a8f0',17.5);arrow(645,80,CY);
txt(668,87,'成长价值:13.73','#f4f400',18.5);arrow(802,80,RD,1);
txt(818,87,'收益价值: 7.40','#f01818',18);arrow(942,80,RD,1);
txt(959,87,'回调认同: 7.26','#d0d0d0',18);arrow(1083,80,RD,1);
S.push('<path d="M1669 74l7 7-7 7-7-7Z" fill="none" stroke="#888" stroke-width="1.4"/><rect x="1691" y="74" width="13" height="15" rx="2" fill="none" stroke="#777" stroke-width="1.6"/><rect x="1698" y="76" width="4" height="11" fill="#999"/>');
S.push('<circle cx="11" cy="838" r="8" fill="#777"/><path d="M7 836l4 4 4-4" stroke="#222" stroke-width="2" fill="none"/>');
txt(26,845,'VOLUME: 315939.59','#c8c8c8',18);arrow(204,838,CY);
txt(221,845,'MA5: 445466.16','#c8c8c8',18);arrow(359,838,RD,1);
txt(376,845,'MA10: 277638.75','#f4f400',18);arrow(524,838,RD,1);

/* input method bar */
rect(1282,903,158,25,'#f8f8f0');
rect(1284,905,154,21,'#d4d0c8');
rect(1286,906,18,19,'#d4d0c8','stroke="#666" stroke-width="1"');
txt(1295,922,'A','#900000',18,'text-anchor="middle" font-weight="700" style="font-family:\'Liberation Serif\',serif"');
rect(1306,906,70,19,'#d4d0c8','stroke="#777" stroke-width="1"');
txt(1309,922,'极品五笔','#222',16.5);
rect(1378,906,18,19,'#d4d0c8','stroke="#777" stroke-width="1"');
S.push('<path d="M1388 909a7 7 0 1 1-6 11a7 7 0 0 0 6-11Z" fill="#111"/>');
rect(1398,906,18,19,'#d4d0c8','stroke="#777" stroke-width="1"');
S.push('<path d="M1404 913h2v2h-2ZM1410 913h2v4h-2Z" fill="#222"/>');
rect(1418,906,18,19,'#aaa','stroke="#777" stroke-width="1"');
S.push('<path d="M1420 911h14M1420 915h14M1420 919h14" stroke="#eee" stroke-width="2" stroke-dasharray="2 1"/>');

document.getElementById('tdxChart').innerHTML=S.join('');
})();
</script>
</body>
</html>
